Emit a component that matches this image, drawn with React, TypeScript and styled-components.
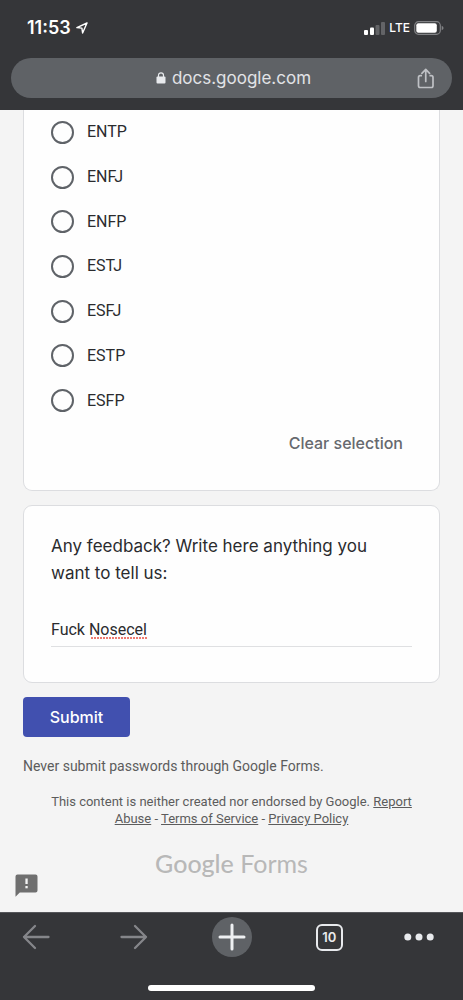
import React, { useState } from "react";
import styled, { createGlobalStyle } from "styled-components";

const GlobalStyle = createGlobalStyle`
  *, *::before, *::after { box-sizing: border-box; }
  body { margin: 0; background: #f4f4f4; font-family: Roboto, "Liberation Sans", sans-serif; color: #2a2b2e; }
  button, input { font: inherit; color: inherit; }
  button { border: 0; padding: 0; background: none; cursor: pointer; }
`;

const Page = styled.div`
  min-height: 100vh;
  display: flex;
  flex-direction: column;
`;

const Header = styled.header`
  background: #353639;
  color: #ffffff;
  font-family: Inter, "Liberation Sans", sans-serif;
  padding: 0 11px 12px;
`;

const StatusBar = styled.div`
  height: 58px;
  padding: 0 8px 2px 16px;
  display: flex;
  align-items: center;
  justify-content: space-between;
`;

const StatusGroup = styled.div<{ $gap: number }>`
  display: flex;
  align-items: center;
  gap: ${(p) => p.$gap}px;
`;

const Time = styled.span`
  font-size: 18px;
  font-weight: 600;
  line-height: 20px;
`;

const Network = styled.span`
  font-size: 12px;
  font-weight: 500;
  line-height: 16px;
`;

const AddressBar = styled.div`
  height: 40px;
  border-radius: 20px;
  background: #5f6266;
  display: grid;
  grid-template-columns: 36px 1fr 36px;
  align-items: center;
  padding: 0 8px;
`;

const Address = styled.button`
  grid-column: 2;
  display: flex;
  align-items: center;
  justify-content: center;
  gap: 6px;
  padding-left: 4px;
  font-size: 17px;
  line-height: 24px;
  color: #e2e3e6;
`;

const IconButton = styled.button`
  display: flex;
  align-items: center;
  justify-content: center;
  height: 40px;
  svg { flex: none; }
`;

const Main = styled.main`
  flex: 1;
  padding: 0 23px;
`;

const Card = styled.section<{ $continued?: boolean }>`
  background: #fefefe;
  border: 1px solid #dcdde0;
  border-radius: 9px;
  padding: 27px 27px 35px;
  ${(p) =>
    p.$continued &&
    `
    border-top: 0;
    border-radius: 0 0 9px 9px;
    padding: 0 27px 35px;
    margin-bottom: 14px;
  `}
`;

const OptionList = styled.div`
  height: 313px;
  display: grid;
  grid-auto-rows: 1fr;
`;

const Option = styled.label`
  display: flex;
  align-items: center;
  gap: 13px;
  font-size: 16px;
  line-height: 20px;
  cursor: pointer;
`;

const Radio = styled.input`
  appearance: none;
  width: 23px;
  height: 23px;
  margin: 0;
  border: 2px solid #5f6368;
  border-radius: 50%;
  &:checked {
    border-color: #4150af;
    background: radial-gradient(#4150af 50%, transparent 54%);
  }
`;

const ClearRow = styled.div`
  display: flex;
  justify-content: flex-end;
  padding: 8px 9px 0 0;
`;

const ClearButton = styled.button`
  font-family: Inter, "Liberation Sans", sans-serif;
  font-size: 16px;
  font-weight: 500;
  line-height: 24px;
  color: #66696e;
`;

const Question = styled.label`
  display: block;
  padding-right: 16px;
  font-family: Inter, "Liberation Sans", sans-serif;
  font-size: 17px;
  line-height: 27px;
`;

const Field = styled.div`
  position: relative;
  margin-top: 31px;
`;

const TextInput = styled.input`
  display: block;
  width: 100%;
  height: 29px;
  padding: 0 0 6px;
  border: 0;
  border-bottom: 1px solid #dfe0e2;
  border-radius: 0;
  outline: none;
  background: transparent;
  font-size: 16px;
`;

const SpellingMark = styled.span`
  position: absolute;
  left: 40px;
  top: 19px;
  width: 56px;
  height: 2px;
  background: repeating-linear-gradient(90deg, #ee7a70 0 2px, transparent 2px 3px);
`;

const SubmitButton = styled.button`
  display: block;
  margin-top: 14px;
  width: 107px;
  height: 40px;
  border-radius: 4px;
  background: #4150af;
  color: #ffffff;
  font-family: Inter, "Liberation Sans", sans-serif;
  font-size: 16px;
  font-weight: 500;
`;

const Warning = styled.p`
  margin: 20px 0 0;
  font-size: 14px;
  line-height: 18px;
  color: #5c5c5c;
`;

const Legal = styled.p`
  margin: 18px 0 0;
  padding: 0 16px;
  font-size: 13px;
  line-height: 17px;
  text-align: center;
  color: #5c5c5c;
  a { color: inherit; }
`;

const Brand = styled.div`
  margin-top: 18px;
  font-family: Lato, "Liberation Sans", sans-serif;
  font-size: 25px;
  line-height: 36px;
  text-align: center;
  color: #b8b8b8;
  strong { font-weight: 500; }
`;

const ReportButton = styled.button`
  display: block;
  margin: -8px 0 0 -8px;
  height: 24px;
  svg { display: block; }
`;

const Footer = styled.footer`
  background: #353639;
  border-top: 1px solid #55565a;
  color: #e8eaed;
  padding-bottom: 9px;
`;

const Toolbar = styled.nav`
  height: 72px;
  padding: 4px 16px 0;
  display: grid;
  grid-template-columns: 40px 40px 40px 40px 40px;
  justify-content: space-between;
  align-items: start;
`;

const NewTab = styled(IconButton)`
  border-radius: 50%;
  background: #5f6266;
`;

const MoreButton = styled(IconButton)`
  padding-right: 16px;
`;

const TabCount = styled.span`
  width: 27px;
  height: 27px;
  border: 2px solid #e8eaed;
  border-radius: 6px;
  font-family: Inter, "Liberation Sans", sans-serif;
  font-size: 13px;
  font-weight: 600;
  line-height: 23px;
  text-align: center;
`;

const HomeIndicator = styled.div`
  width: 36%;
  height: 6px;
  margin: 0 auto;
  border-radius: 3px;
  background: #ffffff;
`;

const types = ["ENTP", "ENFJ", "ENFP", "ESTJ", "ESFJ", "ESTP", "ESFP"];

export default function App() {
  const [selected, setSelected] = useState("");
  const [feedback, setFeedback] = useState("Fuck Nosecel");

  return (
    <Page>
      <GlobalStyle />
      <Header>
        <StatusBar>
          <StatusGroup $gap={5}>
            <Time>11:53</Time>
            <svg width="12" height="12" viewBox="0 0 12 12" fill="none" stroke="#fff" strokeWidth="1.4" strokeLinejoin="round">
              <path d="M11 1 L0.9 5.6 L5.9 6.1 L6.6 11 Z" />
            </svg>
          </StatusGroup>
          <StatusGroup $gap={4}>
            <svg width="21" height="13" viewBox="0 0 21 13">
              <rect x="0" y="8" width="4" height="5" rx="1" fill="#fff" />
              <rect x="6" y="5.5" width="4" height="7.5" rx="1" fill="#fff" />
              <rect x="11.500" y="3" width="4" height="10" rx="1" fill="#636467" />
              <rect x="17" y="0" width="4" height="13" rx="1" fill="#636467" />
            </svg>
            <Network>LTE</Network>
            <svg width="30" height="14" viewBox="0 0 30 14">
              <rect x="0.7" y="0.7" width="25.600" height="12.600" rx="3.800" fill="none" stroke="#818285" strokeWidth="1.200" />
              <rect x="2.300" y="2.200" width="20.500" height="9.600" rx="2" fill="#fff" />
              <path d="M27.700 4.800 Q29.600 5.500 29.600 7 Q29.600 8.500 27.700 9.200 Z" fill="#818285" />
            </svg>
          </StatusGroup>
        </StatusBar>
        <AddressBar>
          <Address>
            <svg width="10" height="12" viewBox="0 0 10 12">
              <rect x="0.500" y="4.500" width="9" height="7" rx="1" fill="#e8eaed" />
              <path d="M2.500 5 V3.300 A2.500 2.500 0 0 1 7.500 3.300 V5" fill="none" stroke="#e8eaed" strokeWidth="1.200" />
            </svg>
            docs.google.com
          </Address>
          <IconButton aria-label="Share">
            <svg width="18" height="21" viewBox="0 0 18 21" fill="none" stroke="#bfc1c5" strokeWidth="1.700" strokeLinecap="round" strokeLinejoin="round">
              <path d="M4.300 7.700 H3.200 Q1.500 7.700 1.500 9.400 V17.800 Q1.500 19.500 3.200 19.500 H14.300 Q16 19.500 16 17.800 V9.400 Q16 7.700 14.300 7.700 H13.200" />
              <path d="M8.750 13.500 V1.800 M4.900 5.300 L8.750 1.400 L12.600 5.300" />
            </svg>
          </IconButton>
        </AddressBar>
      </Header>

      <Main>
        <Card $continued>
          <OptionList role="radiogroup" aria-label="Personality type">
            {types.map((type) => (
              <Option key={type}>
                <Radio
                  type="radio"
                  name="personality"
                  value={type}
                  checked={selected === type}
                  onChange={() => setSelected(type)}
                />
                {type}
              </Option>
            ))}
          </OptionList>
          <ClearRow>
            <ClearButton onClick={() => setSelected("")}>Clear selection</ClearButton>
          </ClearRow>
        </Card>

        <Card>
          <Question htmlFor="feedback">Any feedback? Write here anything you want to tell us:</Question>
          <Field>
            <TextInput id="feedback" value={feedback} onChange={(e) => setFeedback(e.target.value)} />
            <SpellingMark />
          </Field>
        </Card>

        <SubmitButton>Submit</SubmitButton>
        <Warning>Never submit passwords through Google Forms.</Warning>
        <Legal>
          This content is neither created nor endorsed by Google. <a href="#report">Report Abuse</a> -{" "}
          <a href="#terms">Terms of Service</a> - <a href="#privacy">Privacy Policy</a>
        </Legal>
        <Brand>
          <strong>Google</strong> Forms
        </Brand>
        <ReportButton aria-label="Report a problem">
          <svg width="23" height="23" viewBox="0 0 23 23">
            <path d="M2.500 0.500 H20.500 Q22.500 0.500 22.500 2.500 V16.500 Q22.500 18.500 20.500 18.500 H4.800 L0.500 22.700 V2.500 Q0.500 0.500 2.500 0.500 Z" fill="#6f6f6f" />
            <rect x="10.400" y="4.500" width="2.300" height="5.500" fill="#f4f4f4" />
            <rect x="10.400" y="12" width="2.300" height="2.300" fill="#f4f4f4" />
          </svg>
        </ReportButton>
      </Main>

      <Footer>
        <Toolbar aria-label="Browser">
          <IconButton aria-label="Back">
            <svg width="28" height="26" viewBox="0 0 28 26" fill="none" stroke="#85868a" strokeWidth="2.300" strokeLinecap="round" strokeLinejoin="round">
              <path d="M26.500 13 H2 M13 2 L2 13 L13 24" />
            </svg>
          </IconButton>
          <IconButton aria-label="Forward">
            <svg width="28" height="26" viewBox="0 0 28 26" fill="none" stroke="#85868a" strokeWidth="2.300" strokeLinecap="round" strokeLinejoin="round">
              <path d="M1.500 13 H26 M15 2 L26 13 L15 24" />
            </svg>
          </IconButton>
          <NewTab aria-label="New tab">
            <svg width="28" height="28" viewBox="0 0 28 28" stroke="#eef0f2" strokeWidth="3" strokeLinecap="round">
              <path d="M14 2 V26 M2 14 H26" />
            </svg>
          </NewTab>
          <IconButton aria-label="Open tabs">
            <TabCount>10</TabCount>
          </IconButton>
          <MoreButton aria-label="More">
            <svg width="30" height="8" viewBox="0 0 30 8" fill="#e8eaed">
              <circle cx="3.800" cy="4" r="3.500" />
              <circle cx="15" cy="4" r="3.500" />
              <circle cx="26.200" cy="4" r="3.500" />
            </svg>
          </MoreButton>
        </Toolbar>
        <HomeIndicator />
      </Footer>
    </Page>
  );
}
